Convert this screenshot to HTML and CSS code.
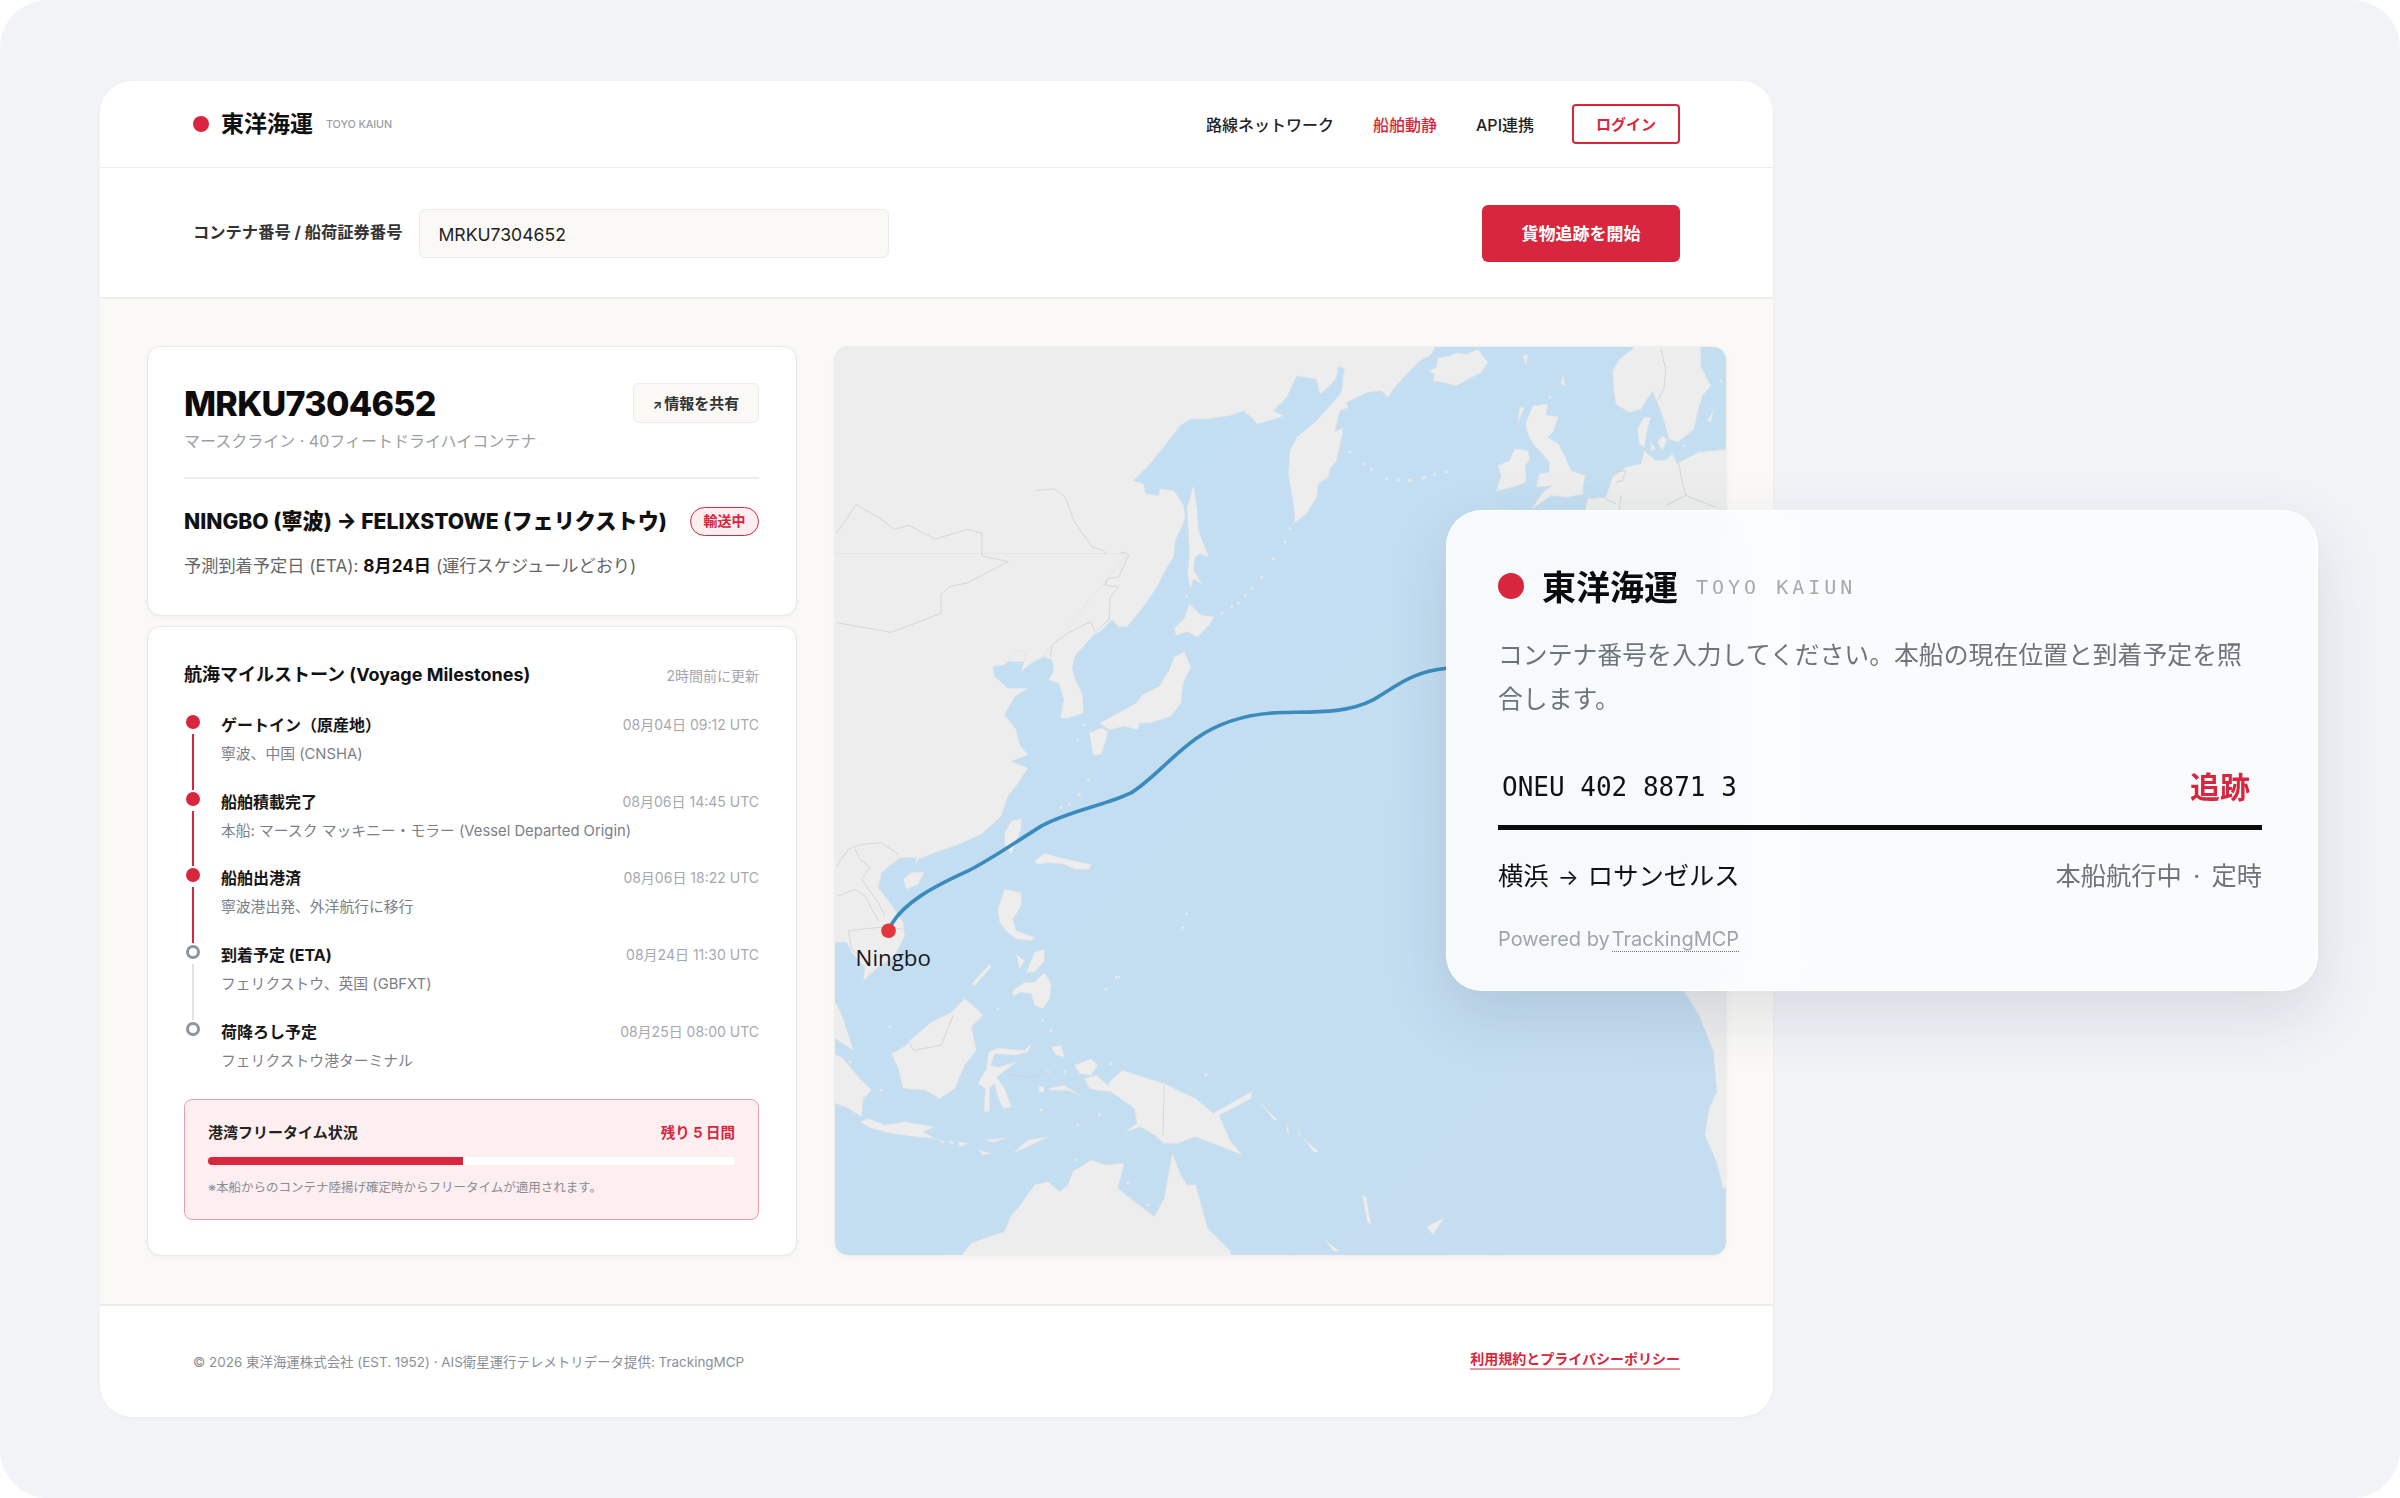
FILE: index.html
```html
<!doctype html>
<html lang="ja">
    <head>
        <meta charset="UTF-8" />
        <meta name="viewport" content="width=device-width, initial-scale=1.0" />
        <title>東洋海運 - 貨物追跡</title>
        <link rel="stylesheet" href="styles.css">
    </head>
    <body>
        <div class="screen">
            <div class="window">
                <header class="site-header">
                    <div class="logo">
                        <span class="logo-dot"></span>
                        <span class="logo-name">東洋海運</span>
                        <span class="logo-sub">TOYO KAIUN</span>
                    </div>
                    <nav class="nav">
                        <a>路線ネットワーク</a>
                        <a class="active">船舶動静</a>
                        <a>API連携</a>
                        <button class="login">ログイン</button>
                    </nav>
                </header>

                <div class="search-row">
                    <label for="container-no">コンテナ番号 / 船荷証券番号</label>
                    <input id="container-no" value="MRKU7304652" />
                    <button class="search-btn">貨物追跡を開始</button>
                </div>

                <main class="main">
                    <div class="left-col">
                        <section class="card summary">
                            <div class="summary-top">
                                <h1>MRKU7304652</h1>
                                <button class="share"><span class="share-arrow">↗</span>情報を共有</button>
                            </div>
                            <p class="carrier">マースクライン · 40フィートドライハイコンテナ</p>
                            <hr />
                            <div class="route-row">
                                <h2>NINGBO (寧波) → FELIXSTOWE (フェリクストウ)</h2>
                                <span class="badge">輸送中</span>
                            </div>
                            <p class="eta">予測到着予定日 (ETA): <b>8月24日</b> (運行スケジュールどおり)</p>
                        </section>

                        <section class="card voyage">
                            <div class="voyage-head">
                                <h3>航海マイルストーン (Voyage Milestones)</h3>
                                <span>2時間前に更新</span>
                            </div>
                            <ol class="milestones">
                                <li class="done">
                                    <div class="mark"><i></i><u></u></div>
                                    <div class="ms-body">
                                        <div class="ms-line"><b>ゲートイン（原産地）</b><time>08月04日 09:12 UTC</time></div>
                                        <p>寧波、中国 (CNSHA)</p>
                                    </div>
                                </li>
                                <li class="done">
                                    <div class="mark"><i></i><u></u></div>
                                    <div class="ms-body">
                                        <div class="ms-line"><b>船舶積載完了</b><time>08月06日 14:45 UTC</time></div>
                                        <p>本船: マースク マッキニー・モラー (Vessel Departed Origin)</p>
                                    </div>
                                </li>
                                <li class="done">
                                    <div class="mark"><i></i><u></u></div>
                                    <div class="ms-body">
                                        <div class="ms-line"><b>船舶出港済</b><time>08月06日 18:22 UTC</time></div>
                                        <p>寧波港出発、外洋航行に移行</p>
                                    </div>
                                </li>
                                <li>
                                    <div class="mark"><i></i><u></u></div>
                                    <div class="ms-body">
                                        <div class="ms-line"><b>到着予定 (ETA)</b><time>08月24日 11:30 UTC</time></div>
                                        <p>フェリクストウ、英国 (GBFXT)</p>
                                    </div>
                                </li>
                                <li>
                                    <div class="mark"><i></i></div>
                                    <div class="ms-body">
                                        <div class="ms-line"><b>荷降ろし予定</b><time>08月25日 08:00 UTC</time></div>
                                        <p>フェリクストウ港ターミナル</p>
                                    </div>
                                </li>
                            </ol>
                            <div class="freetime">
                                <div class="freetime-head">
                                    <b>港湾フリータイム状況</b>
                                    <strong>残り 5 日間</strong>
                                </div>
                                <div class="bar"><div class="bar-fill" style="width: 48.3%"></div></div>
                                <p>※本船からのコンテナ陸揚げ確定時からフリータイムが適用されます。</p>
                            </div>
                        </section>
                    </div>

                    <div class="map">
                        <svg viewBox="0 -642 2679 2733" preserveAspectRatio="none">
                            <defs>
                                <linearGradient id="sea" x1="0" y1="0" x2="1" y2="1">
                                    <stop offset="0" stop-color="#c2dff3" />
                                    <stop offset="1" stop-color="#c5ddf0" />
                                </linearGradient>
                            </defs>
                            <rect x="0" y="-642" width="2679" height="2733" fill="url(#sea)" />

                            <!-- north asia + kuril chain, traced on the north-east crop -->
                            <g class="land" transform="translate(588 -660)">
                                <path d="M1215 0L1215 25 1200 45 1170 60 1130 100 1090 145 1075 170 1055 150 1010 155 970 175 950 185 955 200 930 210 915 272 940 262 935 290 920 360 900 385 895 410 865 430 860 470 830 520 790 550 795 535 790 490 775 400 780 330 800 290 860 240 900 195 935 155 940 100 945 85 925 75 920 110 900 135 870 160 860 115 800 105 770 170 730 210 760 225 735 235 680 250 670 235 640 210 600 225 530 235 480 235 450 255 400 320 350 380 310 420 340 430 345 460 385 465 390 445 430 450 445 470 460 495 465 530 455 560 435 600 430 650 405 690 380 740 340 800 290 860 265 860 245 840 215 870 190 885 135 945 125 985 135 1020 155 1060 160 1120 115 1135 90 1135 100 1080 85 1030 55 1020 70 990 65 960 40 950 0 965-600 965-600 0Z" />
                                <path d="M490 435L500 500 505 570 535 650 510 640 495 650 490 690 518 735 490 715 480 745 472 700 478 640 470 500 480 470Z" />
                                <path class="isles" d="M625 790h0M605 800h0M575 820h0M645 765h0M665 745h0M695 710h0M730 655h0M765 605h0M780 565h0M960 335h0M1005 370h0M1025 385h0M1070 415h0M1105 420h0M1140 420h0M1185 410h0M470 770h0" />
                            </g>
                            <g class="border" transform="translate(588 -660)">
                                <path d="M60 950L65 915 110 880 180 845 195 875 235 840 240 770 265 740 225 735 230 715 265 710 295 645 280 635 230 655 220 630 185 620 130 540 105 470 70 445 15 450" />
                            </g>

                            <!-- east asia, japan, taiwan -->
                            <g class="land">
                                <path d="M620 295L590 310 560 335 575 280 550 270 510 315 475 320 480 350 520 385 580 385 540 410 510 465 545 510 555 555 580 585 530 605 580 625 555 665 520 710 500 770 440 825 360 860 300 880 250 900 240 920 245 895 195 895 140 940 130 985 165 1030 205 1090 210 1130 180 1190 130 1225 85 1265 90 1225 50 1180 35 1150-20 1150-20-20 880-20 700 200Z" />
                                <path d="M1020 290L1050 275 1070 320 1045 375 1040 430 1010 470 945 490 915 490 910 510 870 500 825 510 795 490 860 455 905 430 925 405 975 380 1005 330Z" />
                                <path d="M765 520L800 505 820 515 815 540 800 585 775 585 770 550Z" />
                                <path d="M1065 130L1100 165 1140 170 1125 195 1090 230 1060 215 1025 225 1020 205 1050 175Z" />
                                <path d="M205 960L230 940 268 938 250 975 215 990Z" />
                                <path d="M510 855L510 820 530 785 560 778 560 810 530 885Z" />
                                <path d="M600 905L630 882 680 895 720 905 770 915 765 930 720 930 690 915 640 910 610 915Z" />
                                <path class="isles" d="M680 745h0M705 735h0M735 705h0M762 662h0M730 540h0M750 495h0M1045 1105h0M1058 1065h0M845 1255h0M815 1290h0" />
                            </g>
                            <g class="border">
                                <path d="M6 188L169 217 319 160 319 102 345 79 398 68 521 4 442-13 442-81 398-93 301-64 222-105 178-93 134-127 64-168 6-82" />
                                <path d="M5 920L40 870 80 855 140 850 190 885M60 870L75 900 105 925 80 960 130 1030 150 1070M10 1010L60 990 90 1010 130 1085M40 1115L130 1105 205 1110M40 1115L50 1170 85 1200" />
                            </g>

                            <!-- south east asia + australia -->
                            <g class="land" transform="translate(0 990)">
                                <path d="M510 0L560 10 560 50 535 90 545 125 600 145 590 155 545 150 520 130 495 100 490 60Z" />
                                <path d="M545 195L570 215 555 240ZM600 190L630 180 630 215 600 250 575 250ZM535 305L570 280 600 280 630 250 650 285 645 330 625 360 600 350 590 315 560 310 535 320ZM410 285L465 225 470 235 420 290Z" />
                                <path d="M170 495L215 470 225 455 290 400 350 370 390 330 415 350 445 380 410 415 425 485 390 530 360 600 315 630 270 605 205 600 190 540Z" />
                                <path d="M430 585L455 540 462 490 490 478 570 485 592 465 580 490 540 500 480 495 468 530 490 535 545 520 520 540 485 565 510 600 530 655 505 660 488 620 480 585 465 600 465 670 448 670 452 600Z" />
                                <path d="M-10 490L25 510 75 570 110 605 85 630 80 685 40 660-10 640ZM-10 340L5 345 25 390 55 485 30 470-10 440Z" />
                                <path d="M75 700L100 690 150 710 210 700 300 715 265 730 300 750 240 745 170 735 110 720ZM305 750L330 760 325 765ZM345 755L360 765 345 765ZM370 760L400 765 375 775ZM450 755L520 748 480 762ZM535 795L580 755 640 745 590 770ZM430 785L470 795 445 800Z" />
                                <path d="M612 595L625 592 630 610 615 612ZM640 600L690 590 735 620 700 605 650 605ZM650 475L680 470 690 505 665 500ZM720 530L770 510 790 530 770 560 735 555Z" />
                                <path d="M750 570L785 560 820 590 830 575 864 545 990 585 1084 630 1137 675 1252 610 1252 630 1155 680 1190 760 1225 800 1084 745 1032 765 988 765 961 740 917 715 873 730 908 705 900 660 830 610 790 605 765 600Z" />
                                <path d="M1279 645L1331 695 1320 695ZM1357 705L1366 735 1358 730ZM1392 725L1401 740 1394 742ZM1410 750L1454 790 1440 792ZM1472 1055L1516 1090 1500 1090ZM1780 1015L1832 990 1797 1040ZM1586 920L1596 925 1612 1010 1600 1000Z" />
                                <path d="M385 1095L410 1065 450 1050 510 1030 530 980 550 960 600 890 640 880 675 910 700 890 715 850 770 815 810 830 870 825 850 900 900 940 960 985 990 930 1014 795 1040 860 1058 890 1085 890 1120 1020 1190 1090 1190 1110 385 1110Z" />
                                <path d="M2536 280L2598 380 2642 490 2651 610 2628 660 2615 740 2650 820 2670 900 2690 900 2690 280Z" />
                                <path class="isles" d="M165 415h0M45 520h0M140 605h0M625 395h0M650 425h0M620 665h0M730 710h0M795 680h0M830 525h0M1115 560h0M855 265h0M490 360h0M640 550h0M690 550h0M725 815h0M880 885h0M940 950h0" />
                            </g>
                            <g class="border" transform="translate(0 990)">
                                <path d="M225 460L235 485 320 470 355 380M990 590L986 740M520 560L600 565 640 550" />
                            </g>

                            <!-- north atlantic + europe -->
                            <g class="land" transform="translate(1698 -660)">
                                <path d="M85 90L110 80 115 50 150 45 170 35 200 40 235 25 265 65 245 95 205 115 170 135 130 125 100 120 105 100Z" />
                                <path d="M400 195L445 190 440 222 477 228 462 272 445 290 478 310 498 350 515 390 558 405 550 445 552 462 500 470 455 465 395 508 430 455 460 435 410 440 420 400 450 395 450 365 430 340 405 315 385 280 378 250Z" />
                                <path d="M345 325L385 330 392 355 378 375 380 425 340 440 290 452 305 405 295 375 330 360Z" />
                                <path d="M700 0L700 25 660 55 640 90 645 160 650 190 690 215 725 205 760 150 790 225 810 295 835 305 885 265 895 215 910 165 935 135 905 75 905 0Z" />
                                <path d="M735 230L755 230 745 265 735 320 720 310 715 265ZM755 305L770 325 755 330ZM790 285L805 295 790 330 775 305ZM925 240L945 205 935 245ZM370 45L385 40 380 75ZM490 100L498 135 485 130ZM360 200L375 200 355 250Z" />
                                <path d="M985 325L900 335 850 360 835 370 820 340 800 358 770 360 735 330 725 370 680 380 640 410 620 470 565 475 555 520 985 520Z" />
                                <path class="isles" d="M452 170h0M965 120h0M855 315h0M70 412h0M105 402h0M140 395h0M30 420h0" />
                            </g>
                            <g class="border" transform="translate(1698 -660)">
                                <path d="M785 25L800 85 795 140 775 180M840 370L850 430 860 465 800 495M860 465L950 500M665 465L660 510M600 465L650 490M645 395L680 390 670 420 650 425" />
                            </g>

                            <path class="route" d="M170 1095C210 1030 290 985 400 935C470 900 540 850 620 800C700 755 820 735 890 700C950 665 1010 590 1088 535C1160 485 1250 460 1350 458C1450 456 1540 460 1618 420C1680 385 1730 335 1840 325" />
                            <circle class="port" cx="161" cy="1115" r="22" />
                            <text class="port-label" x="62" y="1222">Ningbo</text>
                        </svg>
                    </div>
                </main>

                <footer class="site-footer">
                    <span>© 2026 東洋海運株式会社 (EST. 1952) · AIS衛星運行テレメトリデータ提供: TrackingMCP</span>
                    <a>利用規約とプライバシーポリシー</a>
                </footer>
            </div>

            <aside class="widget">
                <div class="widget-logo">
                    <span class="widget-dot"></span>
                    <span class="widget-name">東洋海運</span>
                    <span class="widget-sub">TOYO KAIUN</span>
                </div>
                <p class="widget-desc">コンテナ番号を入力してください。本船の現在位置と到着予定を照合します。</p>
                <div class="widget-input">
                    <input value="ONEU 402 8871 3" />
                    <button>追跡</button>
                </div>
                <div class="widget-route">
                    <span>横浜 <span class="widget-arrow">→</span> ロサンゼルス</span>
                    <span class="widget-status">本船航行中 · 定時</span>
                </div>
                <div class="widget-powered">Powered by<a>TrackingMCP</a></div>
            </aside>
        </div>
    </body>
</html>
```

FILE: styles.css
```css
* {
    margin: 0;
    padding: 0;
    box-sizing: border-box;
}

body {
    font-family: Inter, "Noto Sans CJK JP", sans-serif;
    background: #fff;
    color: #111;
    width: 2400px;
    height: 1498px;
    overflow: hidden;
}

.screen {
    position: relative;
    width: 2400px;
    height: 1498px;
    padding: 81px 0 0 100px;
    background: #f1f3f7;
    border-radius: 48px;
    overflow: hidden;
}

.window {
    width: 1673px;
    background: #fff;
    border-radius: 32px;
    overflow: hidden;
    box-shadow: 0 1px 3px rgba(30, 40, 60, 0.03);
}

/* header */
.site-header {
    display: flex;
    justify-content: space-between;
    align-items: center;
    height: 87px;
    padding: 0 93px;
    border-bottom: 1px solid #ececec;
}

.logo {
    display: flex;
    align-items: center;
}

.logo-dot {
    width: 16px;
    height: 16px;
    border-radius: 50%;
    background: #d7263d;
    margin-right: 12px;
}

.logo-name {
    font-size: 23px;
    font-weight: 700;
    color: #111;
    margin-right: 13px;
    margin-bottom: 4px;
}

.logo-sub {
    font-size: 10.8px;
    font-weight: 500;
    color: #9a9ea5;
    letter-spacing: -0.1px;
}

.nav {
    display: flex;
    align-items: center;
    gap: 39px;
    font-size: 16px;
    font-weight: 500;
    color: #222;
}

.nav .active {
    color: #d7263d;
}

.login {
    width: 108px;
    height: 40px;
    margin-left: -1px;
    background: #fff;
    border: 2px solid #d7263d;
    border-radius: 4px;
    color: #d7263d;
    font-family: inherit;
    font-size: 15px;
    font-weight: 700;
    padding-bottom: 2px;
}

/* search */
.search-row {
    display: flex;
    align-items: center;
    height: 131px;
    padding: 2px 93px 0;
    border-bottom: 2px solid #ededed;
}

.search-row label {
    font-size: 16.3px;
    font-weight: 700;
    color: #333;
    margin-right: 17px;
    margin-bottom: 5px;
}

.search-row input {
    width: 470px;
    height: 49px;
    padding: 2px 18px 0;
    background: #faf9f6;
    border: 1px solid #ececea;
    border-radius: 6px;
    font-family: inherit;
    font-size: 17.6px;
    color: #222;
}

.search-btn {
    margin-left: auto;
    width: 198px;
    height: 57px;
    padding-bottom: 2px;
    background: #d7263d;
    border: 0;
    border-radius: 6px;
    color: #fff;
    font-family: inherit;
    font-size: 17px;
    font-weight: 700;
}

/* main */
.main {
    display: flex;
    gap: 37px;
    height: 1005px;
    padding: 47px 46px 48px 47px;
    background: #faf9f6;
}

.left-col {
    display: flex;
    flex-direction: column;
    gap: 10px;
    width: 650px;
}

.card {
    background: #fff;
    border: 1px solid #e9e9e7;
    border-radius: 14px;
    padding: 36px 37px 36px 36px;
    box-shadow: 0 2px 6px rgba(0, 0, 0, 0.04);
}

.summary-top {
    display: flex;
    justify-content: space-between;
    align-items: center;
    height: 40px;
}

.summary-top h1 {
    font-size: 34px;
    font-weight: 800;
    color: #0c0c0c;
    letter-spacing: -0.7px;
}

.share {
    width: 126px;
    height: 40px;
    background: #faf9f6;
    border: 1px solid #ececea;
    border-radius: 6px;
    font-family: inherit;
    font-size: 15px;
    font-weight: 700;
    color: #333;
    padding-bottom: 2px;
}

.share-arrow {
    font-size: 12px;
    margin-right: 2px;
}

.carrier {
    font-size: 16px;
    line-height: 20px;
    margin-top: 8px;
    color: #9a9ea5;
}

.summary hr {
    border: 0;
    border-top: 2px solid #ededed;
    margin: 26px 0 28px;
}

.route-row {
    display: flex;
    justify-content: space-between;
    align-items: center;
    height: 29px;
}

.route-row h2 {
    font-size: 21.15px;
    font-weight: 800;
    color: #111;
    margin-bottom: 4px;
}

.badge {
    width: 69px;
    height: 29px;
    line-height: 26px;
    text-align: center;
    border: 1.5px solid #d7263d;
    border-radius: 15px;
    background: #fdeef0;
    color: #d7263d;
    font-size: 14px;
    font-weight: 700;
}

.eta {
    margin-top: 17px;
    font-size: 17.2px;
    line-height: 26px;
    color: #666;
}

.eta b {
    color: #111;
}

.voyage {
    flex: 1;
    padding-top: 34px;
    padding-bottom: 0;
}

.voyage-head {
    display: flex;
    justify-content: space-between;
    align-items: center;
    height: 24px;
    margin-bottom: 30px;
}

.voyage-head h3 {
    font-size: 18px;
    font-weight: 700;
    color: #111;
}

.voyage-head span {
    font-size: 14px;
    color: #a2a6ad;
    margin-top: 4px;
}

.milestones {
    list-style: none;
    height: 384px;
}

.milestones li {
    display: flex;
    gap: 21px;
    height: 76.7px;
    padding-left: 2px;
}

.mark {
    display: flex;
    flex-direction: column;
    align-items: center;
    width: 14px;
}

.mark i {
    flex: none;
    width: 14px;
    height: 14px;
    border-radius: 50%;
    background: #fff;
    border: 3px solid #8b94a0;
}

.mark u {
    flex: 1;
    width: 2px;
    margin: 5px 0 2px;
    background: #e3e3e3;
}

.done .mark i {
    background: #d7263d;
    border-color: #d7263d;
}

.done .mark u {
    background: #d7263d;
}

.ms-body {
    flex: 1;
    margin-top: -3px;
}

.ms-line {
    display: flex;
    justify-content: space-between;
    align-items: center;
    height: 24px;
}

.ms-line b {
    font-size: 16px;
    font-weight: 700;
    color: #161616;
}

.ms-line time {
    font-size: 14px;
    color: #a5a9b0;
}

.ms-body p {
    margin-top: 7px;
    font-size: 14.8px;
    line-height: 22px;
    color: #7b8088;
}

.freetime {
    height: 121px;
    padding: 21px 23px 0;
    background: #fdeff0;
    border: 1.5px solid #e8a0a8;
    border-radius: 8px;
}

.freetime-head {
    display: flex;
    justify-content: space-between;
    align-items: center;
    height: 20px;
}

.freetime-head b {
    font-size: 15px;
    font-weight: 700;
    color: #222;
}

.freetime-head strong {
    font-size: 14.5px;
    color: #d7263d;
}

.bar {
    height: 8px;
    margin-top: 16px;
    background: #fff;
    border-radius: 4px;
    overflow: hidden;
}

.bar-fill {
    height: 100%;
    background: #d7263d;
}

.freetime p {
    margin-top: 14px;
    font-size: 12.5px;
    line-height: 18px;
    color: #888c93;
}

/* map */
.map {
    flex: 1;
    border-radius: 14px;
    overflow: hidden;
    border: 1px solid #efefed;
    box-shadow: 0 2px 6px rgba(0, 0, 0, 0.03);
}

.map svg {
    display: block;
    width: 100%;
    height: 100%;
}

.land {
    filter: blur(1.5px);
}

.land path {
    fill: #ededed;
    stroke: #dde1e4;
    stroke-width: 2;
    stroke-linejoin: round;
}

.land .isles {
    fill: none;
    stroke: #e6e8ea;
    stroke-width: 9;
    stroke-linecap: round;
}

.border path {
    fill: none;
    stroke: #cdd1d4;
    stroke-width: 2.5;
    stroke-linejoin: round;
}

.route {
    fill: none;
    stroke: #3b8cbc;
    stroke-width: 11;
    stroke-linecap: round;
}

.port {
    fill: #e0363c;
}

.port-label {
    font-family: "Open Sans", sans-serif;
    font-size: 67px;
    font-weight: 500;
    fill: #15181c;
}

/* footer */
.site-footer {
    display: flex;
    justify-content: space-between;
    align-items: center;
    height: 113px;
    padding: 0 93px;
    border-top: 2px solid #ececec;
    font-size: 13.45px;
    color: #8a8f98;
}

.site-footer span {
    margin-bottom: 2px;
}

.site-footer a {
    font-size: 14px;
    font-weight: 700;
    color: #d7263d;
    border-bottom: 2px solid #eb98a3;
    line-height: 18px;
    margin-bottom: 4px;
}

/* floating widget */
.widget {
    position: absolute;
    left: 1446px;
    top: 510px;
    width: 872px;
    height: 481px;
    padding: 55px 55px 0 51px;
    background: rgba(251, 252, 253, 0.92);
    backdrop-filter: blur(24px);
    border: 1px solid rgba(255, 255, 255, 0.9);
    border-radius: 36px;
    box-shadow: 0 24px 64px rgba(30, 50, 80, 0.13);
}

.widget-logo {
    display: flex;
    align-items: center;
    height: 40px;
}

.widget-dot {
    width: 26px;
    height: 26px;
    border-radius: 50%;
    background: #d7263d;
    margin-right: 18px;
}

.widget-name {
    font-size: 34px;
    font-weight: 700;
    color: #0c0c0c;
    margin-right: 18px;
    margin-bottom: 2px;
}

.widget-sub {
    font-family: "DejaVu Sans Mono", monospace;
    font-size: 20px;
    letter-spacing: 4px;
    color: #a6a9ae;
    margin-top: 2px;
}

.widget-desc {
    margin-top: 27px;
    font-size: 24.85px;
    line-height: 44px;
    color: #6f747b;
}

.widget-input {
    display: flex;
    align-items: center;
    justify-content: space-between;
    margin-top: 46px;
    height: 63px;
    padding: 0 12px 18px 4px;
    border-bottom: 5px solid #0c0c0c;
}

.widget-input input {
    flex: 1;
    border: 0;
    background: none;
    font-family: "DejaVu Sans Mono", monospace;
    font-size: 26px;
    color: #111;
}

.widget-input button {
    border: 0;
    background: none;
    font-family: inherit;
    font-size: 30px;
    font-weight: 700;
    color: #d7263d;
    margin-bottom: 5px;
}

.widget-route {
    display: flex;
    justify-content: space-between;
    align-items: center;
    margin-top: 26px;
    height: 36px;
    font-size: 25.3px;
    color: #111;
}

.widget-arrow {
    font-size: 22px;
    margin: 0 2px;
}

.widget-status {
    color: #6f747b;
    word-spacing: 4px;
}

.widget-powered {
    margin-top: 33px;
    font-size: 20px;
    line-height: 28px;
    color: #a0a4ab;
}

.widget-powered a {
    margin-left: 2px;
    border-bottom: 1px dotted #70757c;
}
```
